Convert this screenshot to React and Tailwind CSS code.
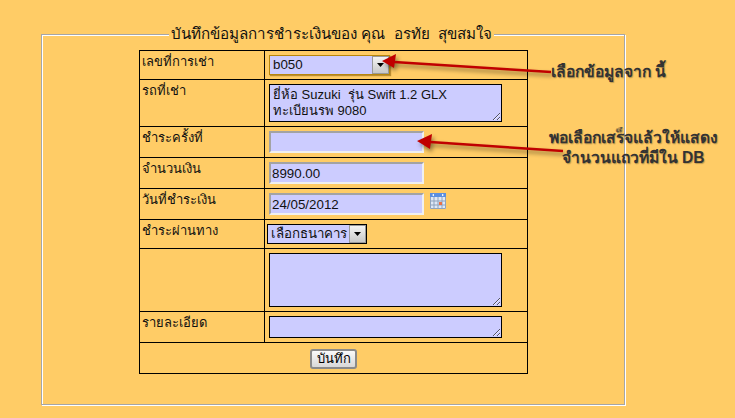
const inset = 'border-2 border-t-[#a3a3a3] border-l-[#a3a3a3] border-r-[#f0f0f0] border-b-[#f0f0f0] bg-[#ccccff] h-[22px] w-[155px] px-px text-[13.33px] text-[#111] block outline-none'
const area = 'border border-black bg-[#ccccff] w-[233px] block text-[13px] leading-[16px] text-[#111] px-[3px] py-[2px] outline-none'
const labelCell = 'border border-black align-top pl-[2px] pt-[1px] w-[125px] text-[13px] leading-[20px] text-[#111]'
const fieldCell = 'border border-black align-top pl-[4px] pt-[4px]'

function SelectBox({ value, width, className }) {
  return (
    <div className={`flex items-center justify-between border h-[20px] bg-[#ccccff] text-[13.33px] text-[#111] ${width} ${className}`}>
      <span className="pl-[3px]">{value}</span>
      <span className="w-[17px] h-[18px] bg-gradient-to-b from-[#f4f4f4] to-[#c8c8c8] border border-[#999] flex items-center justify-center">
        <svg width="7" height="4" viewBox="0 0 7 4"><path d="M0 0h7L3.5 4z" fill="#000" /></svg>
      </span>
    </div>
  )
}

function CalendarIcon() {
  return (
    <svg width="16" height="16" viewBox="0 0 16 16" className="shrink-0">
      <rect x="0" y="0" width="16" height="16" fill="#dfe8f6" />
      <rect x="0" y="0" width="16" height="4" fill="#5b8fe0" />
      <path d="M2 2l2-1.2v2.4zM14 2l-2-1.2v2.4z" fill="#fff" />
      <path d="M0.5 4v11.5h15V4M4 4v12M8 4v12M12 4v12M0 8h16M0 12h16" stroke="#8ea3bd" fill="none" strokeWidth="1" />
      <rect x="9" y="9" width="3" height="3" fill="#e8714a" />
    </svg>
  )
}

export default function App() {
  return (
    <div className="relative h-[418px] w-[735px] overflow-hidden bg-[#ffcc66] pt-[25px] pl-[41px] font-['Liberation_Sans','Noto_Sans',sans-serif]">
      <fieldset className="w-[584px] h-[380px] border border-[#a6a6a6] shadow-[inset_1px_1px_0_#fff,1px_1px_0_#fff] pl-[97px]">
        <legend className="ml-[30px] px-[2px] bg-[#ffcc66] text-[15.2px] leading-[18px] text-[#111] whitespace-pre">บันทึกข้อมูลการชำระเงินของ คุณ  อรทัย  สุขสมใจ</legend>
        <table className="border-collapse border border-black w-[389px] mt-[7px]">
          <tbody>
            <tr className="h-[29px]">
              <td className={labelCell}>เลขที่การเช่า</td>
              <td className={fieldCell}>
                <SelectBox value="b050" width="w-[121px]" className="border-[#b8860b] shadow-[1px_1px_1px_rgba(120,80,0,0.5)]" />
              </td>
            </tr>
            <tr className="h-[47px]">
              <td className={labelCell}>รถที่เช่า</td>
              <td className={fieldCell}>
                <textarea
                  readOnly
                  className={`${area} h-[38px]`}
                  value={'ยี่ห้อ Suzuki  รุ่น Swift 1.2 GLX\nทะเบียนรพ 9080'}
                />
              </td>
            </tr>
            <tr className="h-[31px]">
              <td className={labelCell}>ชำระครั้งที่</td>
              <td className={fieldCell}><input readOnly className={inset} value="" /></td>
            </tr>
            <tr className="h-[31px]">
              <td className={labelCell}>จำนวนเงิน</td>
              <td className={fieldCell}><input readOnly className={inset} value="8990.00" /></td>
            </tr>
            <tr className="h-[31px]">
              <td className={labelCell}>วันที่ชำระเงิน</td>
              <td className={fieldCell}>
                <div className="flex items-start gap-[6px]">
                  <input readOnly className={inset} value="24/05/2012" />
                  <CalendarIcon />
                </div>
              </td>
            </tr>
            <tr className="h-[29px]">
              <td className={labelCell}>ชำระผ่านทาง</td>
              <td className="border border-black align-top pl-[2px] pt-[4px]">
                <SelectBox value="เลือกธนาคาร" width="w-[100px]" className="border-black" />
              </td>
            </tr>
            <tr className="h-[63px]">
              <td className={labelCell}></td>
              <td className={fieldCell}><textarea readOnly className={`${area} h-[54px]`} value="" /></td>
            </tr>
            <tr className="h-[31px]">
              <td className={labelCell}>รายละเอียด</td>
              <td className={fieldCell}><textarea readOnly className={`${area} h-[22px]`} value="" /></td>
            </tr>
            <tr className="h-[31px]">
              <td colSpan={2} className="border border-black text-center align-middle">
                <button className="w-[47px] h-[20px] rounded-[3px] border-2 border-[#8a8a8a] bg-gradient-to-b from-[#fafafa] to-[#d8d8d8] text-[13px] leading-[14px] text-black">บันทึก</button>
              </td>
            </tr>
          </tbody>
        </table>
      </fieldset>

      {/* arrows drawn on top of the screenshot */}
      <svg className="absolute left-0 top-0 pointer-events-none drop-shadow-[2px_3px_2px_rgba(0,0,0,0.45)]" width="735" height="418">
        <path d="M551 72L394 62" stroke="#c00000" strokeWidth="2.5" fill="none" />
        <path d="M382 61L396 54L394 68z" fill="#c00000" />
        <path d="M563 151L430 142" stroke="#c00000" strokeWidth="2.5" fill="none" />
        <path d="M417 141L432 134L430 149z" fill="#c00000" />
      </svg>
      <div className="absolute left-[551px] top-[63px] text-[15.6px] leading-[18px] font-bold text-[#333] whitespace-nowrap [text-shadow:1px_1px_1px_rgba(0,0,0,0.25)]">เลือกข้อมูลจาก นี้</div>
      <div className="absolute left-[533px] top-[128px] w-[200px] text-center text-[15.6px] leading-[20px] font-bold text-[#333] [text-shadow:1px_1px_1px_rgba(0,0,0,0.25)]">
        <div>พอเลือกเสร็จแล้วให้แสดง</div>
        <div>จำนวนแถวที่มีใน DB</div>
      </div>
    </div>
  )
}
